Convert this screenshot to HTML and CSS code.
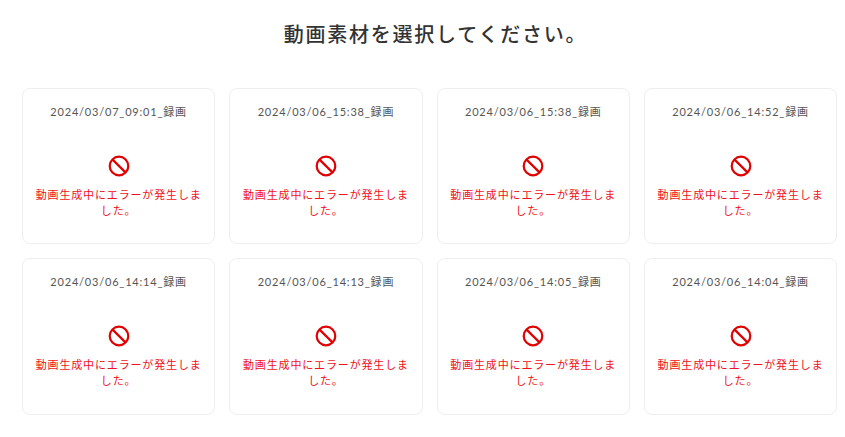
FILE: index.html
```html
<!DOCTYPE html>
<html lang="ja">
<head>
    <meta charset="UTF-8">
    <title>動画素材を選択</title>
    <link rel="stylesheet" href="styles.css">
</head>
<body>

<h1 class="page-title">動画素材を選択してください。</h1>

<div class="card-grid">
    <div class="card">
        <div class="card-name">2024/03/07_09:01_録画</div>
        <div class="card-error">
            <svg class="error-icon" viewBox="0 0 22 22"><circle cx="11" cy="11" r="9.3"/><path d="M4.6 4.6 17.4 17.4"/></svg>
            <p class="error-text">動画生成中にエラーが発生しました。</p>
        </div>
    </div>
    <div class="card">
        <div class="card-name">2024/03/06_15:38_録画</div>
        <div class="card-error">
            <svg class="error-icon" viewBox="0 0 22 22"><circle cx="11" cy="11" r="9.3"/><path d="M4.6 4.6 17.4 17.4"/></svg>
            <p class="error-text">動画生成中にエラーが発生しました。</p>
        </div>
    </div>
    <div class="card">
        <div class="card-name">2024/03/06_15:38_録画</div>
        <div class="card-error">
            <svg class="error-icon" viewBox="0 0 22 22"><circle cx="11" cy="11" r="9.3"/><path d="M4.6 4.6 17.4 17.4"/></svg>
            <p class="error-text">動画生成中にエラーが発生しました。</p>
        </div>
    </div>
    <div class="card">
        <div class="card-name">2024/03/06_14:52_録画</div>
        <div class="card-error">
            <svg class="error-icon" viewBox="0 0 22 22"><circle cx="11" cy="11" r="9.3"/><path d="M4.6 4.6 17.4 17.4"/></svg>
            <p class="error-text">動画生成中にエラーが発生しました。</p>
        </div>
    </div>
    <div class="card">
        <div class="card-name">2024/03/06_14:14_録画</div>
        <div class="card-error">
            <svg class="error-icon" viewBox="0 0 22 22"><circle cx="11" cy="11" r="9.3"/><path d="M4.6 4.6 17.4 17.4"/></svg>
            <p class="error-text">動画生成中にエラーが発生しました。</p>
        </div>
    </div>
    <div class="card">
        <div class="card-name">2024/03/06_14:13_録画</div>
        <div class="card-error">
            <svg class="error-icon" viewBox="0 0 22 22"><circle cx="11" cy="11" r="9.3"/><path d="M4.6 4.6 17.4 17.4"/></svg>
            <p class="error-text">動画生成中にエラーが発生しました。</p>
        </div>
    </div>
    <div class="card">
        <div class="card-name">2024/03/06_14:05_録画</div>
        <div class="card-error">
            <svg class="error-icon" viewBox="0 0 22 22"><circle cx="11" cy="11" r="9.3"/><path d="M4.6 4.6 17.4 17.4"/></svg>
            <p class="error-text">動画生成中にエラーが発生しました。</p>
        </div>
    </div>
    <div class="card">
        <div class="card-name">2024/03/06_14:04_録画</div>
        <div class="card-error">
            <svg class="error-icon" viewBox="0 0 22 22"><circle cx="11" cy="11" r="9.3"/><path d="M4.6 4.6 17.4 17.4"/></svg>
            <p class="error-text">動画生成中にエラーが発生しました。</p>
        </div>
    </div>
</div>

</body>
</html>
```

FILE: styles.css
```css
body {
    margin: 0;
    padding: 21px 8px 0 22px;
    background-color: #ffffff;
    color: #333;
    font-family: Lato, 'Noto Sans CJK JP', sans-serif;
    overflow: hidden;
}
.page-title {
    margin: 0 0 41px;
    padding-left: 12px;
    font-size: 20px;
    line-height: 26px;
    font-weight: 500;
    letter-spacing: 1.75px;
    text-align: center;
    color: #333;
}
.card-grid {
    display: grid;
    grid-template-columns: repeat(4, 193.3px);
    grid-auto-rows: 156.3px;
    column-gap: 14px;
    row-gap: 14px;
}
.card {
    box-sizing: border-box;
    display: flex;
    flex-direction: column;
    align-items: center;
    padding: 15px 12px 0;
    border: 1px solid #eeeeee;
    border-radius: 8px;
    background-color: #fff;
}
.card-name {
    font-size: 11px;
    line-height: 16px;
    letter-spacing: 0.8px;
    color: #555;
}
.card-error {
    display: flex;
    flex-direction: column;
    align-items: center;
    margin-top: 35px;
}
.error-icon {
    width: 22px;
    height: 22px;
    fill: none;
    stroke: #e00000;
    stroke-width: 2.2;
}
.error-text {
    margin: 10px 0 0;
    font-size: 11px;
    line-height: 16px;
    letter-spacing: 0.85px;
    text-align: center;
    color: #f01020;
}
```
